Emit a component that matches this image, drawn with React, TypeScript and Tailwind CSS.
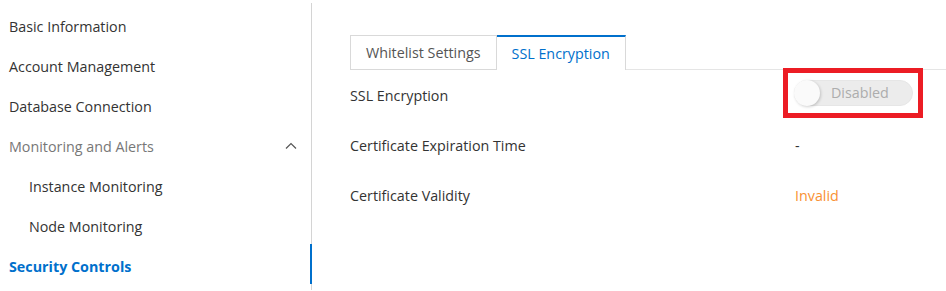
import React from "react";

const navItem = "h-10 flex items-center text-[14.3px]";

export default function App() {
  return (
    <div
      className="w-[946px] h-[291px] bg-white flex overflow-hidden"
      style={{ fontFamily: '"Open Sans", "Noto Sans", sans-serif' }}
    >
      {/* Sidebar */}
      <div className="relative w-[312px] shrink-0 mt-[3px] h-[287px] border-r border-[#d4d4d4] pt-[4px]">
        <div className={`${navItem} pl-[9px] text-[#333]`}>Basic Information</div>
        <div className={`${navItem} pl-[9px] text-[#333]`}>Account Management</div>
        <div className={`${navItem} pl-[9px] text-[#333]`}>Database Connection</div>
        <div className={`${navItem} pl-[9px] pr-[14px] justify-between text-[#777]`}>
          <span>Monitoring and Alerts</span>
          <svg width="12" height="8" viewBox="0 0 12 8" className="-mt-[3px]">
            <path d="M1 6.5 L6 1.5 L11 6.5" fill="none" stroke="#555" strokeWidth="1.2" />
          </svg>
        </div>
        <div className={`${navItem} pl-[29px] text-[#333]`}>Instance Monitoring</div>
        <div className={`${navItem} pl-[29px] text-[#333]`}>Node Monitoring</div>
        <div className={`${navItem} pl-[9px] text-[#0070cc] font-bold`}>Security Controls</div>
        <div className="absolute right-[-1px] top-[241px] w-[2px] h-[40px] bg-[#0070cc]" />
      </div>

      {/* Content */}
      <div className="flex-1 pt-[35px] pl-[38px]">
        <div className="flex h-[35px] text-[14.3px]">
          <div className="h-full border border-[#d9d9d9] px-[15px] flex items-center text-[#555]">
            Whitelist Settings
          </div>
          <div className="h-full border-t-2 border-t-[#0070cc] border-r border-r-[#d9d9d9] px-[15px] flex items-center text-[#0070cc]">
            SSL Encryption
          </div>
          <div className="flex-1 h-full border-b border-[#e5e5e5]" />
        </div>

        <div className="flex h-[50px] pt-[2px] items-center text-[14.3px] text-[#333]">
          <div className="w-[444px]">SSL Encryption</div>
          <div className="relative mb-[6px]">
            <div className="w-[119px] h-[26px] rounded-full bg-[#ececec] border border-[#e6e6e6] flex items-center">
              <div className="w-[26px] h-[26px] -ml-px rounded-full bg-[#fafafa] shadow-[1px_1px_3px_rgba(0,0,0,0.18)]" />
              <span className="pl-[11px] text-[#adadad]">Disabled</span>
            </div>
            <div className="absolute left-[-11px] top-[-12px] w-[140px] h-[50px] border-[5px] border-[#ec1c24]" />
          </div>
        </div>

        <div className="flex h-[50px] pt-[2px] items-center text-[14.3px] text-[#333]">
          <div className="w-[445px]">Certificate Expiration Time</div>
          <div>-</div>
        </div>

        <div className="flex h-[50px] pt-[2px] items-center text-[14.3px] text-[#333]">
          <div className="w-[445px]">Certificate Validity</div>
          <div className="text-[#f99133]">Invalid</div>
        </div>
      </div>
    </div>
  );
}
